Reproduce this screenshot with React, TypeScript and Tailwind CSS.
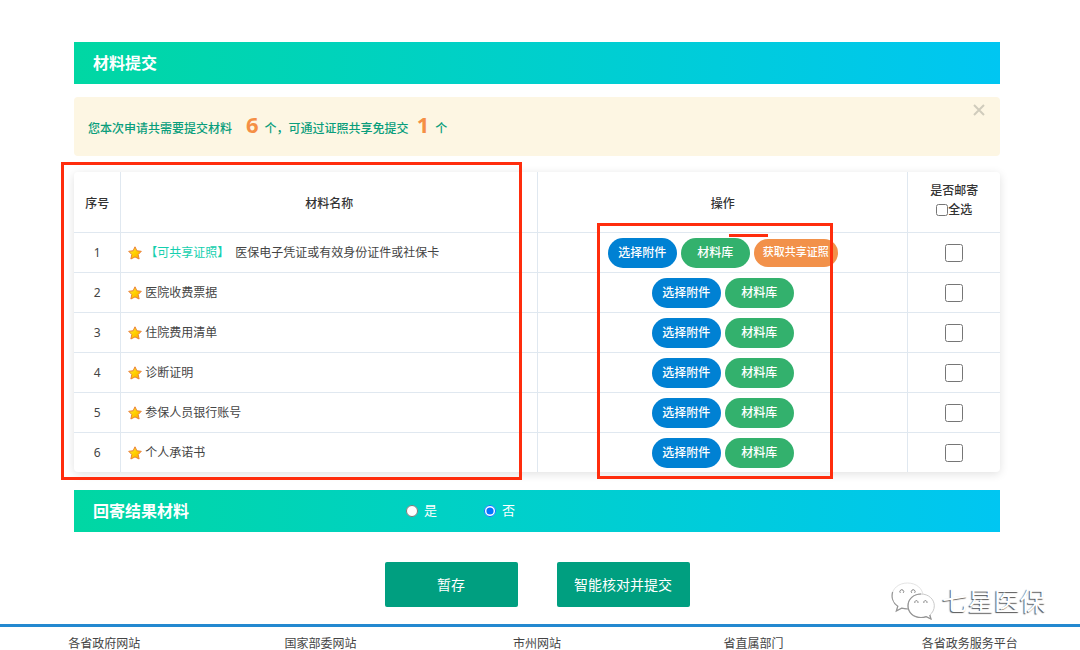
import { useState } from "react";

const materials = [
  { name: "医保电子凭证或有效身份证件或社保卡", shared: true },
  { name: "医院收费票据", shared: false },
  { name: "住院费用清单", shared: false },
  { name: "诊断证明", shared: false },
  { name: "参保人员银行账号", shared: false },
  { name: "个人承诺书", shared: false },
];

const footerLinks = ["各省政府网站", "国家部委网站", "市州网站", "省直属部门", "各省政务服务平台"];

function Star() {
  return (
    <svg viewBox="0 0 14 14" className="size-3.5 shrink-0" aria-hidden="true">
      <defs>
        <linearGradient id="star" x1="0" y1="0" x2="1" y2="1">
          <stop offset="0" stopColor="#fff04a" />
          <stop offset="0.5" stopColor="#ffd000" />
          <stop offset="1" stopColor="#ffa000" />
        </linearGradient>
      </defs>
      <path
        d="M7 0.8 L8.9 4.8 L13.3 5.3 L10.2 8.5 L11.1 13 L7 10.9 L2.9 13 L3.8 8.5 L0.7 5.3 L5.1 4.8 Z"
        fill="url(#star)"
        stroke="#ea8038"
        strokeWidth="1"
        strokeLinejoin="round"
      />
    </svg>
  );
}

function Watermark() {
  return (
    <div className="pointer-events-none absolute right-[34px] bottom-[30px] flex items-center gap-[7px]">
      <svg viewBox="0 0 44 38" className="h-[38px] w-11" fill="#fff" aria-hidden="true">
        <path
          d="M16.5 1 C7.5 1 1 6.8 1 14 C1 18.2 3.2 21.7 6.8 24.2 L5.3 29 L10.6 26.2 C12.7 26.8 14.5 27 17 27 C26 27 32 21 32 14 C32 6.8 25.5 1 16.5 1 Z"
          stroke="#dcdcdc"
          strokeWidth="0.8"
        />
        <path
          d="M1.6 10 C0.4 14.5 1.2 20.6 6.8 24.2 L5.3 29 L10.6 26.2 C12.7 26.8 14.5 27 17 27"
          fill="none"
          stroke="#959595"
          strokeWidth="1.2"
        />
        <path
          d="M9.3 10.8 A1.9 1.9 0 1 1 12.3 10.8 M20.7 10.8 A1.9 1.9 0 1 1 23.7 10.8"
          fill="none"
          stroke="#808080"
        />
        <path
          d="M30 12 C22.5 12 17 17.2 17 23.8 C17 30.6 22.5 35.5 30 35.5 C31.8 35.5 33.6 35.2 35.2 34.6 L40 37 L38.8 33 C41.6 30.8 43.3 27.5 43.3 23.8 C43.3 17.2 37.5 12 30 12 Z"
          stroke="#c4c4c4"
          strokeWidth="0.9"
        />
        <path
          d="M30 12 C22.5 12 17 17.2 17 23.8 C17 30.6 22.5 35.5 30 35.5 C31.8 35.5 33.6 35.2 35.2 34.6 L40 37 L38.8 33"
          fill="none"
          stroke="#959595"
          strokeWidth="1.2"
        />
        <path
          d="M24 21 A1.6 1.6 0 1 1 26.8 21 M33 21 A1.6 1.6 0 1 1 35.8 21"
          fill="none"
          stroke="#808080"
        />
      </svg>
      <span className="text-[26px] leading-8 text-white [text-shadow:-1px_1px_1px_#555]">
        七星医保
      </span>
    </div>
  );
}

export default function App() {
  const [checked, setChecked] = useState<boolean[]>(materials.map(() => false));
  const [mailBack, setMailBack] = useState("no");
  const pill = "h-[30px] w-[69px] rounded-full text-xs font-medium text-white";
  const cell = "border-t border-l border-[#e0e8f0]";

  return (
    <div className="relative bg-white pt-[42px] font-['Noto_Sans','Noto_Sans_CJK_SC',sans-serif] text-xs text-[#444]">
      <main className="pr-20 pl-[74px]">
        <h2 className="flex h-[42px] items-center bg-linear-to-r from-[#00d7a3] to-[#00c6f2] px-[19px] text-base font-bold text-white">
          材料提交
        </h2>

        <div className="mt-[13px] flex h-[59px] items-start justify-between rounded bg-[#fdf6e3] px-3.5 font-medium text-[#0a9e7c]">
          <p className="flex items-baseline self-center pb-1.5">
            您本次申请共需要提交材料
            <strong className="mr-1.5 ml-3.5 text-[22px] leading-7 text-[#f58f45]">6</strong>
            个，可通过证照共享免提交
            <strong className="mr-1.5 ml-2 text-[22px] leading-7 text-[#f58f45]">1</strong>个
          </p>
          <button type="button" aria-label="关闭" className="mt-1.5 text-[#d0ccbc]">
            <svg viewBox="0 0 14 14" className="size-3.5" stroke="currentColor" strokeWidth="2" aria-hidden="true">
              <path d="M2 2 L12 12 M12 2 L2 12" />
            </svg>
          </button>
        </div>

        <div className="relative mt-4">
          <table className="w-full table-fixed border-separate border-spacing-0 rounded shadow-[0_2px_10px_rgba(0,0,0,0.12)]">
            <colgroup>
              <col className="w-[5%]" />
              <col className="w-[45%]" />
              <col className="w-[40%]" />
              <col className="w-[10%]" />
            </colgroup>
            <thead>
              <tr className="h-15 text-[#333]">
                <th className="pt-1 font-medium">序号</th>
                <th className="border-l border-[#e0e8f0] pt-1 font-medium">材料名称</th>
                <th className="border-l border-[#e0e8f0] pt-1 font-medium">操作</th>
                <th className="border-l border-[#e0e8f0] pb-1 font-medium">
                  <div className="leading-[19px]">是否邮寄</div>
                  <label className="flex items-center justify-center leading-[19px]">
                    <input
                      type="checkbox"
                      className="size-3"
                      checked={checked.every(Boolean)}
                      onChange={(e) => setChecked(materials.map(() => e.target.checked))}
                    />
                    全选
                  </label>
                </th>
              </tr>
            </thead>
            <tbody>
              {materials.map((m, i) => (
                <tr key={m.name} className="h-10">
                  <td className="border-t border-[#e0e8f0] text-center">{i + 1}</td>
                  <td className={cell}>
                    <div className="flex items-center gap-[3px] pl-[7px]">
                      <Star />
                      {m.shared && <span className="mr-[3px] text-[#14cfae]">【可共享证照】</span>}
                      <span>{m.name}</span>
                    </div>
                  </td>
                  <td className={cell}>
                    <div className="flex items-center justify-center gap-1">
                      <button type="button" className={`${pill} bg-[#0081d3]`}>选择附件</button>
                      <button type="button" className={`${pill} bg-[#33b16d]`}>材料库</button>
                      {m.shared && (
                        <button type="button" className="h-7 w-[84px] rounded-full bg-[#f2914a] text-[11px] font-medium text-white">
                          获取共享证照
                        </button>
                      )}
                    </div>
                  </td>
                  <td className={`${cell} text-center`}>
                    <input
                      type="checkbox"
                      aria-label={m.name}
                      className="size-[18px] align-middle"
                      checked={checked[i]}
                      onChange={(e) => setChecked(checked.map((c, j) => (j === i ? e.target.checked : c)))}
                    />
                  </td>
                </tr>
              ))}
            </tbody>
          </table>
          <div className="pointer-events-none absolute -top-[10px] -left-[13px] h-[318px] w-[461px] border-3 border-[#ff2d0d]" />
          <div className="pointer-events-none absolute top-[51px] left-[523px] h-[256px] w-[236px] border-3 border-[#ff2d0d]" />
          <div className="pointer-events-none absolute top-[62px] left-[655px] h-[3px] w-[39px] bg-[#ff2d0d]" />
        </div>

        <section className="mt-[18px] flex h-[42px] items-center bg-linear-to-r from-[#00d7a3] to-[#00c6f2] px-[19px] text-[13px] text-white">
          <h2 className="w-[313px] text-base font-bold">回寄结果材料</h2>
          <div className="flex gap-[47px]">
            <label className="flex items-center gap-1.5">
              <input type="radio" name="mail" className="size-3" checked={mailBack === "yes"} onChange={() => setMailBack("yes")} />
              是
            </label>
            <label className="flex items-center gap-1.5">
              <input type="radio" name="mail" className="size-3" checked={mailBack === "no"} onChange={() => setMailBack("no")} />
              否
            </label>
          </div>
        </section>

        <div className="mt-[30px] flex justify-center gap-[39px] text-sm text-white">
          <button type="button" className="h-[45px] w-[133px] rounded-xs bg-[#009f80]">暂存</button>
          <button type="button" className="h-[45px] w-[133px] rounded-xs bg-[#009f80]">智能核对并提交</button>
        </div>
      </main>

      <footer className="mt-[17px] border-t-3 border-[#2389d0]">
        <nav className="mr-0.5 -ml-1 grid grid-cols-5 pt-[11px] text-center leading-3">
          {footerLinks.map((l) => (
            <a key={l} href="#">{l}</a>
          ))}
        </nav>
      </footer>
      <Watermark />
    </div>
  );
}
